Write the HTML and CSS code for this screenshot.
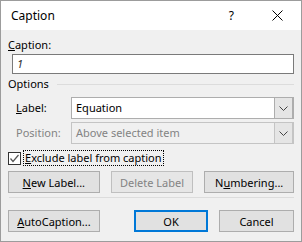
FILE: index.html
```html
<!DOCTYPE html>
<html lang="en">
<head>
    <meta charset="UTF-8">
    <title>Caption</title>
    <link rel="stylesheet" href="styles.css">
</head>
<body>
    <div class="window">
        <div class="titlebar">
            <span class="title">Caption</span>
            <span class="help">?</span>
            <svg class="close" width="11" height="11" viewBox="0 0 11 11">
                <path d="M0.5 0.5 L10.5 10.5 M10.5 0.5 L0.5 10.5" stroke="#000" stroke-width="1" fill="none"/>
            </svg>
        </div>

        <div class="content">
            <div class="field-label"><u>C</u>aption:</div>
            <div class="text-input"><i>1</i></div>

            <div class="group-head">
                <span>Options</span>
                <div class="rule"></div>
            </div>

            <div class="row">
                <span class="row-label"><u>L</u>abel:</span>
                <div class="combo">
                    <span class="combo-value">Equation</span>
                    <span class="combo-btn">
                        <svg width="9" height="5" viewBox="0 0 9 5"><path d="M0.5 0.5 L4.5 4.5 L8.5 0.5" stroke="#444" fill="none"/></svg>
                    </span>
                </div>
            </div>

            <div class="row disabled">
                <span class="row-label">Position:</span>
                <div class="combo">
                    <span class="combo-value">Above selected item</span>
                    <span class="combo-btn">
                        <svg width="9" height="5" viewBox="0 0 9 5"><path d="M0.5 0.5 L4.5 4.5 L8.5 0.5" stroke="#444" fill="none"/></svg>
                    </span>
                </div>
            </div>

            <div class="check-row">
                <span class="checkbox">
                    <svg width="11" height="11" viewBox="0 0 11 11"><path d="M1.5 5.5 L4 8.5 L9.5 2" stroke="#555" stroke-width="1.2" fill="none"/></svg>
                </span>
                <span class="focus"><u>E</u>xclude label from caption</span>
            </div>

            <div class="button-row">
                <button class="btn wide"><u>N</u>ew Label...</button>
                <button class="btn mid" disabled>Delete Label</button>
                <button class="btn wide2">N<u>u</u>mbering...</button>
            </div>

            <div class="separator"></div>

            <div class="button-row bottom">
                <button class="btn wide"><u>A</u>utoCaption...</button>
                <span class="spacer"></span>
                <button class="btn ok">OK</button>
                <button class="btn cancel">Cancel</button>
            </div>
        </div>
    </div>
</body>
</html>
```

FILE: styles.css
```css
body {
    margin: 0;
    font-family: "Noto Sans", "Open Sans", sans-serif;
    font-size: 11px;
    line-height: 16px;
    color: #000;
}
.window {
    width: 302px;
    height: 242px;
    box-sizing: border-box;
    border: 1px solid #9c9c9c;
    background-color: #f0f0f0;
}
.titlebar {
    height: 29px;
    background-color: #fff;
    display: flex;
    align-items: center;
}
.title {
    margin-left: 10px;
    font-size: 12px;
    flex: 1;
}
.help {
    margin-right: 38px;
    font-size: 12px;
}
.close {
    margin-right: 18px;
}
.content {
    padding: 0 7px 0 7px;
}
.field-label {
    margin-top: 7px;
}
.text-input {
    margin: 1px 0 0 4px;
    height: 20px;
    box-sizing: border-box;
    border: 1px solid #7a7a7a;
    background-color: #fff;
    padding-left: 4px;
    line-height: 18px;
    color: #333;
}
.group-head {
    display: flex;
    align-items: center;
    margin-top: 2px;
    height: 16px;
}
.group-head .rule {
    flex: 1;
    height: 1px;
    background-color: #dcdcdc;
    margin-left: 8px;
}
.row {
    display: flex;
    align-items: center;
    margin-top: 5px;
}
.row + .row {
    margin-top: 3px;
}
.row-label {
    width: 55px;
    padding-left: 8px;
}
.combo {
    flex: 1;
    height: 22px;
    box-sizing: border-box;
    border: 1px solid #adadad;
    background-color: #fff;
    display: flex;
}
.combo-value {
    flex: 1;
    padding-left: 4px;
    line-height: 20px;
}
.combo-btn {
    width: 17px;
    background-color: #e5e5e5;
    border: 1px solid #adadad;
    border-width: 0 1px 0 1px;
    display: flex;
    align-items: center;
    justify-content: center;
}
.disabled {
    color: #838383;
}
.disabled .combo {
    background-color: #f0f0f0;
    border-color: #c4c4c4;
}
.disabled .combo-btn {
    border-color: #c4c4c4;
}
.check-row {
    display: flex;
    align-items: center;
    margin-top: 6px;
    height: 16px;
}
.checkbox {
    width: 13px;
    height: 13px;
    box-sizing: border-box;
    border: 1px solid #333;
    background-color: #fff;
    display: flex;
    align-items: center;
    justify-content: center;
}
.focus {
    margin-left: 2px;
    padding: 0 1px;
    border: 1px dotted #000;
    line-height: 14px;
}
.button-row {
    display: flex;
    margin-top: 5px;
    gap: 11px;
}
.btn {
    height: 22px;
    box-sizing: border-box;
    border: 1px solid #adadad;
    background-color: #e1e1e1;
    font-family: inherit;
    font-size: 11px;
    color: #000;
    padding: 0;
}
.btn:disabled {
    color: #838383;
    border-color: #bfbfbf;
    background-color: #e6e6e6;
}
.wide { width: 92px; }
.mid { width: 83px; }
.wide2 { width: 90px; }
.separator {
    height: 1px;
    background-color: #dcdcdc;
    margin-top: 4px;
    margin-left: 1px;
}
.bottom {
    margin-top: 12px;
}
.spacer {
    flex: 1;
}
.ok {
    width: 74px;
    border: 2px solid #0078d7;
}
.cancel {
    width: 75px;
}
```
